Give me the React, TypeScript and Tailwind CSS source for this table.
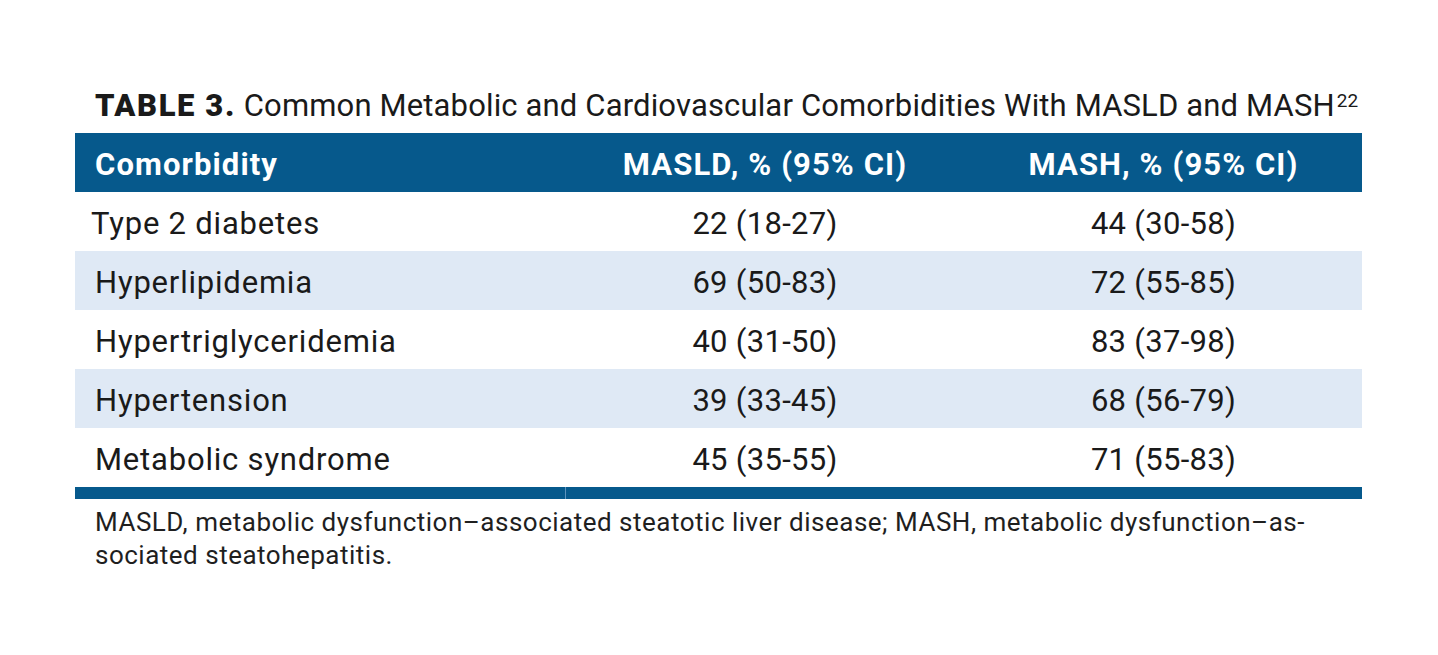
const rows = [
  { name: 'Type 2 diabetes', masld: '22 (18-27)', mash: '44 (30-58)', shade: false, indent: true },
  { name: 'Hyperlipidemia', masld: '69 (50-83)', mash: '72 (55-85)', shade: true },
  { name: 'Hypertriglyceridemia', masld: '40 (31-50)', mash: '83 (37-98)', shade: false },
  { name: 'Hypertension', masld: '39 (33-45)', mash: '68 (56-79)', shade: true },
  { name: 'Metabolic syndrome', masld: '45 (35-55)', mash: '71 (55-83)', shade: false },
];

export default function App() {
  return (
    <div className="min-h-[655px] w-[1438px] bg-white pl-[75px] pt-[88px] font-['Roboto',sans-serif] text-[#1a1a1a]">
      <div className="w-[1287px]">
        <h2 className="pl-5 text-[31px] leading-[36px] tracking-[0.15px]">
          <span className="font-black tracking-[1.6px]">TABLE 3.</span> Common Metabolic and Cardiovascular
          Comorbidities With MASLD and MASH<sup className="ml-[2px] text-[19px] tracking-normal">22</sup>
        </h2>

        <div className="mt-[9px]">
          <div className="grid h-[59px] grid-cols-[490px_400px_397px] items-center bg-[#06598c] pt-[5px] text-[31px] font-bold tracking-[1.1px] text-white">
            <div className="pl-5">Comorbidity</div>
            <div className="text-center">MASLD, % (95% CI)</div>
            <div className="text-center">MASH, % (95% CI)</div>
          </div>
          {rows.map((r) => (
            <div
              key={r.name}
              className={`grid h-[59px] grid-cols-[490px_400px_397px] items-center pt-[5px] text-[31px] tracking-[0.3px] ${
                r.shade ? 'bg-[#dfe9f5]' : 'bg-white'
              }`}
            >
              <div className={`tracking-[0.8px] ${r.indent ? 'pl-4' : 'pl-5'}`}>{r.name}</div>
              <div className="text-center">{r.masld}</div>
              <div className="text-center">{r.mash}</div>
            </div>
          ))}
          <div className="flex h-[12px]">
            <div className="w-[490px] bg-[#06598c]" />
            <div className="w-px bg-[#5d93bd]" />
            <div className="flex-1 bg-[#06598c]" />
          </div>
        </div>

        <p className="pl-5 pt-[7px] text-[26px] leading-[33px] tracking-[0.5px] text-[#1f1f1f]">
          MASLD, metabolic dysfunction–associated steatotic liver disease; MASH, metabolic dysfunction–as-
          <br />
          sociated steatohepatitis.
        </p>
      </div>
    </div>
  );
}
